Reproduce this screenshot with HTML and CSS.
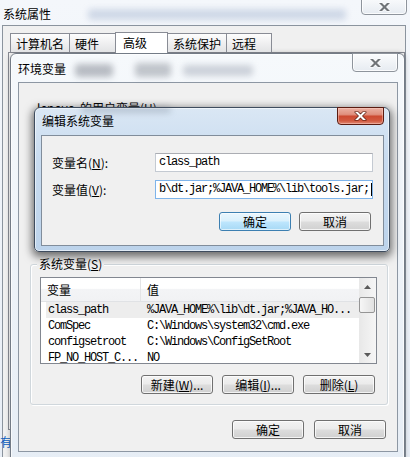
FILE: index.html
```html
<!DOCTYPE html>
<html lang="zh-CN">
<head>
<meta charset="utf-8">
<title>系统属性</title>
<link rel="stylesheet" href="styles.css">
</head>
<body>
<div class="win w1">
  <div class="blur b1"></div>
  <div class="w1-title">系统属性</div>
  <div class="cap-close inactive w1-close">
    <svg width="13" height="10" viewBox="0 0 13 10"><path d="M1 1H4L6.5 3.5L9 1H12L8 5L12 9H9L6.5 6.5L4 9H1L5 5Z" fill="#707478" stroke="#ffffff" stroke-width="1.2" paint-order="stroke" stroke-linejoin="round"/></svg>
  </div>
  <div class="w1-body">
    <div class="tabs">
      <div class="tab t1">计算机名</div>
      <div class="tab t2">硬件</div>
      <div class="tab t3 sel">高级</div>
      <div class="tab t4">系统保护</div>
      <div class="tab t5">远程</div>
    </div>
    <div class="tab-panel"></div>
    <div class="link">有</div>
  </div>
</div>

<div class="win w2">
  <div class="blur b2"></div>
  <div class="blur b3"></div>
  <div class="blur b4"></div>
  <div class="w2-title">环境变量</div>
  <div class="cap-close inactive w2-close">
    <svg width="13" height="10" viewBox="0 0 13 10"><path d="M1 1H4L6.5 3.5L9 1H12L8 5L12 9H9L6.5 6.5L4 9H1L5 5Z" fill="#707478" stroke="#ffffff" stroke-width="1.2" paint-order="stroke" stroke-linejoin="round"/></svg>
  </div>
  <div class="w2-content">
    <div class="ugroup"><span class="ulabel">lenovo</span><span class="ulabel2">的用户变量(<u>U</u>)</span></div>
    <div class="sgroup">
      <div class="glabel">系统变量(<u>S</u>)</div>
      <div class="list">
        <div class="list-main">
          <div class="list-head">
            <div class="hc c1">变量</div>
            <div class="hc c2">值</div>
          </div>
          <div class="row hot"><span class="c1">class_path</span><span class="c2">%JAVA_HOME%\lib\dt.jar;%JAVA_HO...</span></div>
          <div class="row"><span class="c1">ComSpec</span><span class="c2">C:\Windows\system32\cmd.exe</span></div>
          <div class="row"><span class="c1">configsetroot</span><span class="c2">C:\Windows\ConfigSetRoot</span></div>
          <div class="row"><span class="c1">FP_NO_HOST_C...</span><span class="c2">NO</span></div>
        </div>
        <div class="sbar">
          <div class="sb-btn"><svg width="7" height="4" viewBox="0 0 7 4"><path d="M0 4L3.5 0L7 4Z" fill="#5a5a5a"/></svg></div>
          <div class="thumb"></div>
          <div class="sb-fill"></div>
          <div class="sb-btn"><svg width="7" height="4" viewBox="0 0 7 4"><path d="M0 0L3.5 4L7 0Z" fill="#5a5a5a"/></svg></div>
        </div>
      </div>
      <div class="btns">
        <div class="btn">新建(<u>W</u>)...</div>
        <div class="btn">编辑(<u>I</u>)...</div>
        <div class="btn">删除(<u>L</u>)</div>
      </div>
    </div>
    <div class="w2-footer">
      <div class="btn">确定</div>
      <div class="btn">取消</div>
    </div>
  </div>
</div>

<div class="win w3">
  <div class="blur b5"></div>
  <div class="w3-title">编辑系统变量</div>
  <div class="cap-close active w3-close">
    <svg width="13" height="10" viewBox="0 0 13 10"><path d="M1 1H4L6.5 3.5L9 1H12L8 5L12 9H9L6.5 6.5L4 9H1L5 5Z" fill="#ffffff" stroke="#4a1409" stroke-width="1.2" paint-order="stroke" stroke-linejoin="round"/></svg>
  </div>
  <div class="w3-content">
    <div class="form">
      <div class="flabel">变量名(<u>N</u>):</div>
      <div class="input">class_path</div>
      <div class="flabel">变量值(<u>V</u>):</div>
      <div class="input focus">b\dt.jar;%JAVA_HOME%\lib\tools.jar;<span class="caret"></span></div>
    </div>
    <div class="w3-btns">
      <div class="btn default">确定</div>
      <div class="btn">取消</div>
    </div>
  </div>
</div>
</body>
</html>
```

FILE: styles.css
```css
html, body {
  margin: 0;
  padding: 0;
}
body {
  width: 410px;
  height: 457px;
  overflow: hidden;
  position: relative;
  font-family: "Noto Sans CJK SC", "Noto Sans", sans-serif;
  font-size: 12px;
  color: #000;
  background: #eef3f9;
}
u { text-decoration: underline; text-underline-offset: 1px; }

.win {
  position: absolute;
  box-sizing: border-box;
}

.blur {
  position: absolute;
  filter: blur(3px);
  border-radius: 4px;
  pointer-events: none;
}

/* ---------- outer window ---------- */
.w1 {
  left: 0;
  top: 0;
  width: 410px;
  height: 457px;
  background: linear-gradient(#f4f7fb, #e8eef6);
}
.b1 { left: 88px; top: 9px; width: 258px; height: 11px; background: rgba(140, 160, 195, .35); }
.w1-title {
  position: relative;
  height: 25px;
  box-sizing: border-box;
  padding: 7px 0 0 3px;
  line-height: 13px;
}
.cap-close {
  position: absolute;
  box-sizing: border-box;
  display: flex;
  align-items: center;
  justify-content: center;
  border-radius: 0 0 4px 4px;
}
.cap-close svg { display: block; }
.cap-close.inactive {
  border: 1px solid #8e949c;
  background: linear-gradient(#fbfcfd, #e6ebf1);
  box-shadow: inset 0 0 0 1px rgba(255,255,255,.8);
}
.w1-close { left: 361px; top: -4px; width: 46px; height: 19px; padding-top: 3px; }

.w1-body {
  margin-left: 2px;
  width: 404px;
  height: 432px;
  box-sizing: border-box;
  border: 1px solid #8b949e;
  border-bottom: none;
  background: #f0f0f0;
  padding-top: 7px;
}
.tabs {
  display: flex;
  align-items: flex-end;
  height: 19px;
  margin-left: 7px;
  position: relative;
  z-index: 1;
}
.tab {
  box-sizing: border-box;
  height: 19px;
  border: 1px solid #898c95;
  border-bottom: none;
  background: linear-gradient(#fdfdfd, #e2e3e5);
  padding: 3px 0 0 5px;
  line-height: 13px;
  margin-right: -1px;
}
.t1 { width: 60px; }
.t2 { width: 47px; }
.t3 { width: 53px; }
.t4 { width: 60px; }
.t5 { width: 46px; }
.tab.sel {
  height: 21px;
  margin-bottom: -1px;
  background: #ffffff;
  padding: 3px 0 0 7px;
  position: relative;
  z-index: 2;
}
.tab-panel {
  margin-left: 5px;
  height: 378px;
  box-sizing: border-box;
  border: 1px solid #898c95;
  background: #f9f9f9;
}
.link {
  color: #0b5fc1;
  margin: 5px 0 0 -3px;
  line-height: 14px;
}

/* ---------- environment variables window ---------- */
.w2 {
  left: 10px;
  top: 53px;
  width: 395px;
  height: 420px;
  border: 1px solid #737b86;
  border-radius: 6px 6px 0 0;
  background: linear-gradient(#f6f9fc, #e6edf5);
  box-shadow: inset 0 0 0 1px rgba(255,255,255,.7), 0 0 5px rgba(0,0,0,.25);
}
.b2 { left: 64px; top: 10px; width: 38px; height: 13px; background: rgba(70, 75, 90, .35); }
.b3 { left: 124px; top: 9px; width: 36px; height: 14px; background: rgba(70, 75, 90, .3); }
.b4 { left: 172px; top: 11px; width: 70px; height: 11px; background: rgba(110, 120, 140, .3); }
.w2-title {
  position: relative;
  height: 28px;
  box-sizing: border-box;
  padding: 8px 0 0 7px;
  line-height: 14px;
}
.w2-close { left: 341px; top: -1px; width: 46px; height: 19px; }
.w2-content {
  margin-left: 7px;
  width: 380px;
  height: 370px;
  box-sizing: border-box;
  border: 1px solid #8d97a3;
  background: #f0f0f0;
}
.ugroup {
  height: 181px;
  box-sizing: border-box;
  padding: 18px 0 0 18px;
  line-height: 14px;
  display: flex;
  align-items: flex-start;
}
.ulabel { width: 43px; }
.ulabel2 { white-space: nowrap; }
.sgroup {
  margin-left: 11px;
  width: 358px;
  height: 141px;
  box-sizing: border-box;
  border: 1px solid #d0d7dc;
  border-radius: 3px;
  box-shadow: inset 1px 1px 0 #ffffff, 1px 1px 0 #ffffff;
  padding: 0 12px 0 9px;
}
.glabel {
  width: max-content;
  margin: -8px 0 0 -3px;
  padding: 0 2px;
  background: #f0f0f0;
  line-height: 14px;
}
.list {
  margin-top: 6px;
  width: 337px;
  height: 87px;
  box-sizing: border-box;
  border: 1px solid #828790;
  background: #ffffff;
  display: flex;
}
.list-main {
  flex: 1;
  overflow: hidden;
}
.list-head {
  display: flex;
  height: 24px;
  box-sizing: border-box;
  border-bottom: 1px solid #e0e2e5;
  background: linear-gradient(#ffffff 0%, #ffffff 45%, #f3f4f6 50%, #f1f2f4 100%);
  line-height: 23px;
}
.hc.c1 {
  width: 100px;
  box-sizing: border-box;
  padding-left: 6px;
  border-right: 1px solid #e3e4e6;
}
.hc.c2 { padding-left: 6px; }
.row {
  display: flex;
  height: 16px;
  margin-left: 5px;
  line-height: 16px;
  font-family: "Liberation Mono", "DejaVu Sans Mono", monospace;
  font-size: 12px;
  letter-spacing: -1.2px;
  white-space: nowrap;
}
.row.hot { background: #ededed; }
.row .c1 {
  width: 95px;
  box-sizing: border-box;
  padding-left: 2px;
  overflow: hidden;
}
.row .c2 { padding-left: 6px; }
.sbar {
  width: 17px;
  display: flex;
  flex-direction: column;
  background: linear-gradient(to right, #e8e8e8, #f6f6f6);
}
.sb-btn {
  height: 17px;
  display: flex;
  align-items: center;
  justify-content: center;
}
.thumb {
  margin-top: 2px;
  width: 16px;
  height: 16px;
  box-sizing: border-box;
  border: 1px solid #959595;
  border-radius: 2px;
  background: linear-gradient(to right, #f6f6f6, #e1e1e1);
}
.sb-fill { flex: 1; }

.btns {
  display: flex;
  justify-content: flex-end;
  gap: 9px;
  margin-top: 11px;
}
.btn {
  box-sizing: border-box;
  width: 72px;
  height: 19px;
  border: 1px solid #707070;
  border-radius: 3px;
  background: linear-gradient(#f3f3f3 0%, #ebebeb 48%, #dddddd 52%, #d0d0d0 100%);
  box-shadow: inset 0 0 0 1px rgba(255,255,255,.75);
  display: flex;
  align-items: center;
  justify-content: center;
  line-height: 13px;
  white-space: nowrap;
}
.btn.default {
  border-color: #3c7fb1;
  background: linear-gradient(#eaf6fd 0%, #d9f0fc 48%, #bee6fd 52%, #a7d9f5 100%);
  box-shadow: inset 0 0 0 1px rgba(255,255,255,.6);
}
.w2-footer {
  display: flex;
  justify-content: flex-end;
  gap: 10px;
  padding-right: 11px;
  margin-top: 15px;
}

/* ---------- edit dialog ---------- */
.w3 {
  left: 34px;
  top: 107px;
  width: 356px;
  height: 145px;
  border: 1px solid #3e4c5e;
  border-radius: 6px 6px 5px 5px;
  background: linear-gradient(#dae7f4 0%, #c9dcf0 35%, #bcd3eb 100%);
  box-shadow: inset 0 0 0 1px rgba(255,255,255,.55), 0 3px 9px 2px rgba(0,0,0,.55);
}
.b5 { left: 46px; top: -2px; width: 90px; height: 7px; background: rgba(80, 90, 110, .25); }
.w3-title {
  position: relative;
  height: 27px;
  box-sizing: border-box;
  padding: 6px 0 0 7px;
  line-height: 14px;
}
.cap-close.active {
  border: 1px solid #5a1b10;
  background: linear-gradient(#eab0a2 0%, #e0907e 40%, #cc4a31 52%, #d25a40 80%, #e08a75 100%);
  box-shadow: inset 0 0 0 1px rgba(255,210,200,.45);
}
.w3-close { left: 302px; top: -1px; width: 47px; height: 18px; }
.w3-content {
  margin-left: 6px;
  width: 343px;
  height: 111px;
  box-sizing: border-box;
  border: 1px solid #818d9b;
  background: #f0f0f0;
}
.form {
  display: grid;
  grid-template-columns: 103px 218px;
  row-gap: 8px;
  padding: 17px 0 0 10px;
  align-items: center;
}
.flabel { line-height: 14px; }
.input {
  height: 19px;
  box-sizing: border-box;
  border: 1px solid #c4cad2;
  border-top-color: #abadb3;
  background: #ffffff;
  padding-left: 3px;
  line-height: 17px;
  font-family: "Liberation Mono", "DejaVu Sans Mono", monospace;
  font-size: 12px;
  letter-spacing: -1.2px;
  white-space: nowrap;
  overflow: hidden;
  display: flex;
  align-items: center;
}
.input.focus { border-color: #7eb4ea; }
.caret {
  display: inline-block;
  width: 1px;
  height: 13px;
  margin-left: 2px;
  background: #000;
}
.w3-btns {
  display: flex;
  justify-content: flex-end;
  gap: 8px;
  padding-right: 12px;
  margin-top: 13px;
}
```
